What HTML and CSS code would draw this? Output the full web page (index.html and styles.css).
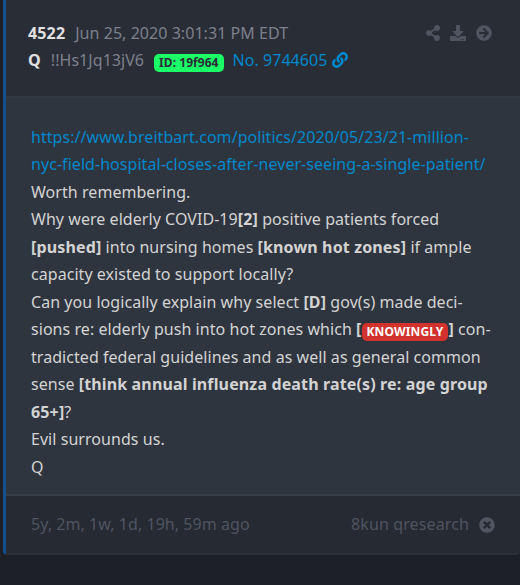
FILE: index.html
```html
<!DOCTYPE html>
<html lang="en">
<head>
  <meta charset="UTF-8">
  <meta name="viewport" content="width=device-width, initial-scale=1.0">
  <title>Post 4522</title>
  <link rel="stylesheet" href="styles.css">
</head>
<body>

  <div class="post">
    <div class="post-header">
      <div class="post-meta">
        <div><strong class="light">4522</strong><span class="date">Jun 25, 2020 3:01:31 PM EDT</span></div>
        <div><strong class="light">Q</strong><span class="trip">!!Hs1Jq13jV6</span><span class="badge badge-id">ID: 19f964</span><a class="post-link" href="#">No. 9744605 <svg class="icon icon-link" viewBox="0 0 512 512"><path d="M326.612 185.391c59.747 59.809 58.927 155.698.36 214.59-.11.12-.24.25-.36.37l-67.2 67.2c-59.27 59.27-155.699 59.262-214.96 0-59.27-59.26-59.27-155.7 0-214.96l37.106-37.106c9.84-9.84 26.786-3.3 27.294 10.606.648 17.722 3.826 35.527 9.69 52.721 1.986 5.822.567 12.262-3.783 16.612l-13.087 13.087c-28.026 28.026-28.905 73.66-1.155 101.96 28.024 28.579 74.086 28.749 102.325.51l67.2-67.19c28.191-28.191 28.073-73.757 0-101.83-3.701-3.694-7.429-6.564-10.341-8.569a16.037 16.037 0 0 1-6.947-12.606c-.396-10.567 3.348-21.456 11.698-29.806l21.054-21.055c5.521-5.521 14.182-6.199 20.584-1.731a152.482 152.482 0 0 1 20.522 17.197zM467.547 44.449c-59.261-59.262-155.69-59.27-214.96 0l-67.2 67.2c-.12.12-.25.25-.36.37-58.566 58.892-59.387 154.781.36 214.59a152.454 152.454 0 0 0 20.521 17.196c6.402 4.468 15.064 3.789 20.584-1.731l21.054-21.055c8.35-8.35 12.094-19.239 11.698-29.806a16.037 16.037 0 0 0-6.947-12.606c-2.912-2.005-6.64-4.875-10.341-8.569-28.073-28.073-28.191-73.639 0-101.83l67.2-67.19c28.239-28.239 74.3-28.069 102.325.51 27.75 28.3 26.872 73.934-1.155 101.96l-13.087 13.087c-4.35 4.35-5.769 10.79-3.783 16.612 5.864 17.194 9.042 34.999 9.69 52.721.509 13.906 17.454 20.446 27.294 10.606l37.106-37.106c59.271-59.259 59.271-155.699.001-214.959z"/></svg></a></div>
      </div>
      <div class="post-actions">
        <svg class="icon icon-share" viewBox="0 0 448 512"><path d="M352 320c-22.608 0-43.387 7.819-59.79 20.895l-102.486-64.054a96.551 96.551 0 0 0 0-41.683l102.486-64.054C308.613 184.181 329.392 192 352 192c53.019 0 96-42.981 96-96S405.019 0 352 0s-96 42.981-96 96c0 7.158.79 14.13 2.276 20.841L155.79 180.895C139.387 167.819 118.608 160 96 160c-53.019 0-96 42.981-96 96s42.981 96 96 96c22.608 0 43.387-7.819 59.79-20.895l102.486 64.054A96.301 96.301 0 0 0 256 416c0 53.019 42.981 96 96 96s96-42.981 96-96-42.981-96-96-96z"/></svg>
        <svg class="icon" viewBox="0 0 512 512"><path d="M216 0h80c13.3 0 24 10.7 24 24v168h87.7c17.8 0 26.7 21.5 14.1 34.1L269.7 378.3c-7.5 7.5-19.8 7.5-27.3 0L90.1 226.1c-12.6-12.6-3.7-34.1 14.1-34.1H192V24c0-13.3 10.7-24 24-24zm296 376v112c0 13.3-10.7 24-24 24H24c-13.3 0-24-10.7-24-24V376c0-13.3 10.7-24 24-24h146.7l49 49c20.1 20.1 52.5 20.1 72.6 0l49-49H488c13.3 0 24 10.7 24 24zm-124 88c0-11-9-20-20-20s-20 9-20 20 9 20 20 20 20-9 20-20zm64 0c0-11-9-20-20-20s-20 9-20 20 9 20 20 20 20-9 20-20z"/></svg>
        <svg class="icon" viewBox="0 0 512 512"><path d="M256 8c137 0 248 111 248 248S393 504 256 504 8 393 8 256 119 8 256 8zm-28.9 143.6l75.5 72.4H120c-13.3 0-24 10.7-24 24v16c0 13.3 10.7 24 24 24h182.6l-75.5 72.4c-9.7 9.3-9.9 24.8-.4 34.3l11 10.9c9.4 9.4 24.6 9.4 33.9 0L404.3 273c9.4-9.4 9.4-24.6 0-33.9L271.6 106.3c-9.4-9.4-24.6-9.4-33.9 0l-11 10.9c-9.5 9.6-9.3 25.1.4 34.4z"/></svg>
      </div>
    </div>

    <div class="post-body">
      <a href="#">https://www.breitbart.com/politics/2020/05/23/21-million-<br>nyc-field-hospital-closes-after-never-seeing-a-single-patient/</a><br>
      Worth remembering.<br>
      Why were elderly COVID-19<strong>[2]</strong> positive patients forced<br>
      <strong>[pushed]</strong> into nursing homes <strong>[known hot zones]</strong> if ample<br>
      capacity existed to support locally?<br>
      Can you logically explain why select <strong>[D]</strong> gov(s) made deci-<br>
      sions re: elderly push into hot zones which <strong>[<span class="badge badge-danger">KNOWINGLY</span>]</strong> con-<br>
      tradicted federal guidelines and as well as general common<br>
      sense <strong>[think annual influenza death rate(s) re: age group<br>
      65+]</strong>?<br>
      Evil surrounds us.<br>
      Q
    </div>

    <div class="post-footer">
      <span>5y, 2m, 1w, 1d, 19h, 59m ago</span>
      <span class="source">8kun qresearch
        <svg class="icon" viewBox="0 0 512 512"><path d="M256 8C119 8 8 119 8 256s111 248 248 248 248-111 248-248S393 8 256 8zm121.6 313.1c4.7 4.7 4.7 12.3 0 17L338 377.6c-4.7 4.7-12.3 4.7-17 0L256 312l-65.1 65.6c-4.7 4.7-12.3 4.7-17 0L134.4 338c-4.7-4.7-4.7-12.3 0-17l65.6-65-65.6-65.1c-4.7-4.7-4.7-12.3 0-17l39.6-39.6c4.7-4.7 12.3-4.7 17 0l65 65.7 65.1-65.6c4.7-4.7 12.3-4.7 17 0l39.6 39.6c4.7 4.7 4.7 12.3 0 17L312 256l65.6 65.1z"/></svg>
      </span>
    </div>
  </div>

</body>
</html>
```

FILE: styles.css
```css
* {
  box-sizing: border-box;
}

body {
  margin: 0;
  height: 585px;
  overflow: hidden;
  background-color: #1e2028;
  color: #d3d3d3;
  font-family: "Noto Sans", sans-serif;
  font-size: 16px;
  line-height: 27.5px;
  letter-spacing: 0.05px;
}

a {
  color: #0088cc;
  text-decoration: none;
}

strong {
  letter-spacing: 0.14px;
}

.post {
  height: 555px;
  margin-left: 3px;
  display: flex;
  flex-direction: column;
  background-color: #2f353f;
  border-left: 3px solid #12508f;
  border-bottom: 2px solid #2b2f37;
  border-radius: 0 0 4px 4px;
}

.post-header {
  height: 98px;
  padding: 20px 28px 0 22px;
  display: flex;
  justify-content: space-between;
  line-height: 27px;
  background-color: #292d36;
  border-bottom: 2px solid #333943;
}

.light {
  color: #e0e0e0;
}

.date, .trip {
  margin-left: 10px;
  color: #7c808c;
}

.post-link {
  margin-left: 9px;
}

.badge {
  display: inline-block;
  padding: 3px 5px;
  border-radius: 5px;
  font-size: 12px;
  font-weight: 700;
  line-height: 12px;
  vertical-align: -1px;
}

.badge-id {
  margin-left: 10px;
  background-color: #1aff66;
  color: #292d36;
}

.badge-danger {
  background-color: #d2322d;
  color: #fff;
}

.post-actions {
  display: flex;
  gap: 10px;
  padding: 5px 0 0;
  color: #4f5461;
}

.icon {
  width: 16px;
  height: 16px;
  fill: currentColor;
}

.icon-share {
  width: 14px;
}

.icon-link {
  vertical-align: -2px;
}

.post-body {
  flex: 1;
  padding: 25.5px 0 0 25px;
  white-space: nowrap;
}

.post-footer {
  height: 59px;
  padding: 1px 25px 0;
  display: flex;
  align-items: center;
  justify-content: space-between;
  background-color: #262a32;
  border-top: 2px solid #393f49;
  color: #4f5461;
}

.source {
  display: flex;
  align-items: center;
  gap: 10px;
  letter-spacing: 0.12px;
}
```
